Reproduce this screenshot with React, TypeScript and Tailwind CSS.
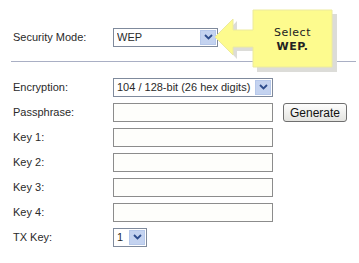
import React from 'react'

// XP-style dropdown arrow button
function DropButton() {
  return (
    <div className="flex h-full w-[16px] items-center justify-center border border-[#b6c8ea] bg-[#c4d3f0]">
      <svg width="9" height="6" viewBox="0 0 9 6">
        <path d="M1 1 L4.5 4.5 L8 1" fill="none" stroke="#2d4c8c" strokeWidth="1.8" />
      </svg>
    </div>
  )
}

function Select({ value, width }: { value: string; width: string }) {
  return (
    <div className={`flex h-[19px] items-center border border-[#7f8a9c] bg-white pl-[3px] pr-[1px] ${width}`}>
      <span className="flex-1 truncate">{value}</span>
      <div className="h-[15px]">
        <DropButton />
      </div>
    </div>
  )
}

function Field({ label, children }: { label: string; children: React.ReactNode }) {
  return (
    <div className="flex h-[18px] items-center">
      <div className="w-[100px] shrink-0">{label}</div>
      {children}
    </div>
  )
}

function TextInput() {
  return <div className="h-[19px] w-[160px] border border-[#8c8c8c] bg-[#fefefb]" />
}

export default function App() {
  return (
    <div
      className="relative h-[263px] w-[359px] overflow-hidden bg-white text-[11px] text-[#2a2a2a]"
      style={{ fontFamily: '"Liberation Sans", Arial, sans-serif' }}
    >
      <div className="pl-[13px] pt-[28px]">
        <Field label="Security Mode:">
          <Select value="WEP" width="w-[105px]" />
        </Field>
      </div>

      <div className="ml-[11px] mr-[3px] mt-[15px] border-t border-[#a9afc4]" />

      <div className="flex flex-col gap-[7px] pl-[13px] pt-[16px]">
        <Field label="Encryption:">
          <Select value="104 / 128-bit (26 hex digits)" width="w-[160px]" />
        </Field>
        <Field label="Passphrase:">
          <TextInput />
          <button className="ml-[10px] h-[19px] w-[64px] rounded-[3px] border border-[#6f6f6f] bg-gradient-to-b from-[#fdfdfd] to-[#e4e4e0] text-[12px] text-[#111]">
            Generate
          </button>
        </Field>
        <Field label="Key 1:">
          <TextInput />
        </Field>
        <Field label="Key 2:">
          <TextInput />
        </Field>
        <Field label="Key 3:">
          <TextInput />
        </Field>
        <Field label="Key 4:">
          <TextInput />
        </Field>
        <Field label="TX Key:">
          <Select value="1" width="w-[34px]" />
        </Field>
      </div>

      {/* callout */}
      <div className="absolute left-[212px] top-[6px] h-[68px] w-[130px]">
        <svg width="130" height="68" viewBox="0 0 130 68" className="absolute inset-0">
          <path
            d="M45 8 H125 V66 H45 V45 H25 V53 L7 34 L25 15 V24 H45 Z"
            fill="#dcdcd8"
          />
          <path
            d="M41 4 H120 V61 H41 V41 H21 V49 L3 31 L21 13 V24 H41 Z"
            fill="#fdfb8e"
            stroke="#ecea9e"
            strokeWidth="1"
          />
        </svg>
        <div
          className="absolute left-[41px] top-[5px] flex h-[57px] w-[79px] flex-col items-center justify-center text-[11px] leading-[14px] tracking-[0.5px] text-[#222]"
          style={{ fontFamily: '"DejaVu Sans", Verdana, sans-serif' }}
        >
          <span>Select</span>
          <span className="font-bold">WEP.</span>
        </div>
      </div>
    </div>
  )
}
